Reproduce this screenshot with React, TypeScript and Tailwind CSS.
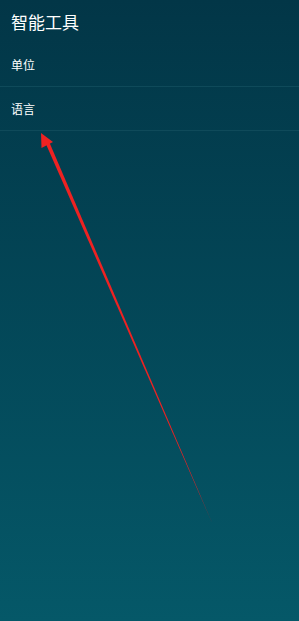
export default function App() {
    const items = ['单位', '语言'];

    return (
        <div
            className="relative w-[299px] h-[621px] overflow-hidden bg-gradient-to-b from-[#023647] to-[#055868] text-white"
            style={{ fontFamily: '"Noto Sans CJK SC", "Noto Sans", sans-serif' }}
        >
            <div className="h-[43px] flex items-center px-[11px]">
                <h1 className="text-[17px] leading-none">智能工具</h1>
            </div>

            <div>
                {items.map((item) => (
                    <div
                        key={item}
                        className="h-[44px] flex items-center px-[11px] border-b border-[#0f4a5a]"
                    >
                        <span className="text-[12px] leading-none">{item}</span>
                    </div>
                ))}
            </div>

            {/* annotation arrow */}
            <svg
                className="absolute inset-0 pointer-events-none"
                width="299"
                height="621"
                viewBox="0 0 299 621"
            >
                <polygon points="213,525 45.5,143 49,141.5" fill="#ee2222" />
                <polygon points="41,133 53,142 41.5,148" fill="#ee2222" />
            </svg>
        </div>
    );
}
